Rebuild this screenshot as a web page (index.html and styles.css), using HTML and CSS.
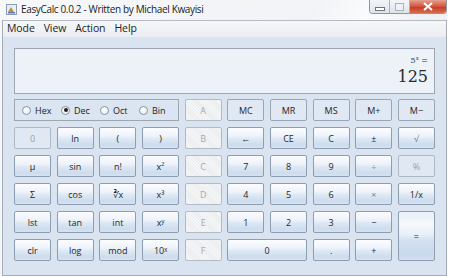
FILE: index.html
```html
<!DOCTYPE html>
<html>
<head>
<meta charset="utf-8">
<link rel="stylesheet" href="styles.css">
</head>
<body>
<div class="window">
  <div class="titlebar">
    <svg class="appicon" width="11" height="11" viewBox="0 0 11 11">
      <rect x="0.5" y="0.5" width="10" height="10" fill="#e9eef5" stroke="#8d9bb0"/>
      <path d="M2 8 L5 3 L8 8 Z" fill="#c98a3a"/>
      <rect x="2" y="8" width="7" height="1.5" fill="#5a7fb0"/>
    </svg>
    <span class="title">EasyCalc 0.0.2 - Written by Michael Kwayisi</span>
    <div class="controls">
      <div class="ctl min"><span class="minbar"></span></div>
      <div class="ctl max"><span class="maxbox"></span></div>
      <div class="ctl close">
        <svg width="12" height="9" viewBox="0 0 12 9"><path d="M2 1 L10 8 M10 1 L2 8" stroke="#ffffff" stroke-width="2.2"/></svg>
      </div>
    </div>
  </div>
  <div class="frame">
    <div class="menubar">
      <span class="menu">Mode</span>
      <span class="menu">View</span>
      <span class="menu">Action</span>
      <span class="menu">Help</span>
    </div>
    <div class="content">
      <div class="display">
        <div class="expr">5³ =</div>
        <div class="result">125</div>
      </div>
      <div class="keys">
        <div class="radios">
          <label class="radio"><span class="dot"></span>Hex</label>
          <label class="radio"><span class="dot on"></span>Dec</label>
          <label class="radio"><span class="dot"></span>Oct</label>
          <label class="radio"><span class="dot"></span>Bin</label>
        </div>
        <div class="btn hex">A</div>
        <div class="btn flat">MC</div>
        <div class="btn flat">MR</div>
        <div class="btn flat">MS</div>
        <div class="btn flat">M+</div>
        <div class="btn flat">M−</div>

        <div class="btn flat dim">0</div>
        <div class="btn">ln</div>
        <div class="btn">(</div>
        <div class="btn">)</div>
        <div class="btn hex">B</div>
        <div class="btn">←</div>
        <div class="btn">CE</div>
        <div class="btn">C</div>
        <div class="btn">±</div>
        <div class="btn dimtext">√</div>

        <div class="btn">μ</div>
        <div class="btn">sin</div>
        <div class="btn">n!</div>
        <div class="btn">x²</div>
        <div class="btn hex">C</div>
        <div class="btn">7</div>
        <div class="btn">8</div>
        <div class="btn">9</div>
        <div class="btn dimtext">÷</div>
        <div class="btn flat dim">%</div>

        <div class="btn">Σ</div>
        <div class="btn">cos</div>
        <div class="btn">∛x</div>
        <div class="btn">x³</div>
        <div class="btn hex">D</div>
        <div class="btn">4</div>
        <div class="btn">5</div>
        <div class="btn">6</div>
        <div class="btn dimtext">×</div>
        <div class="btn">1/x</div>

        <div class="btn">lst</div>
        <div class="btn">tan</div>
        <div class="btn">int</div>
        <div class="btn">xʸ</div>
        <div class="btn hex">E</div>
        <div class="btn">1</div>
        <div class="btn">2</div>
        <div class="btn">3</div>
        <div class="btn">−</div>
        <div class="btn eq">=</div>

        <div class="btn">clr</div>
        <div class="btn">log</div>
        <div class="btn">mod</div>
        <div class="btn">10ˣ</div>
        <div class="btn hex">F</div>
        <div class="btn zero">0</div>
        <div class="btn">.</div>
        <div class="btn">+</div>
      </div>
    </div>
  </div>
</div>
</body>
</html>
```
FILE: styles.css
```css
html, body {
  margin: 0;
  padding: 0;
  background: #ffffff;
}
body {
  width: 450px;
  height: 276px;
  overflow: hidden;
  font-family: "Open Sans", "Noto Sans", sans-serif;
}
.window {
  width: 447px;
  height: 276px;
  display: flex;
  flex-direction: column;
  background: linear-gradient(115deg, #f7f8fa 0%, #f1f3f6 55%, #fafbfc 65%, #eef1f4 75%, #f5f6f8 100%);
}
.titlebar {
  height: 20px;
  display: flex;
  align-items: flex-start;
  flex: none;
}
.appicon {
  margin: 4px 0 0 6px;
}
.title {
  margin: 2px 0 0 4px;
  font-family: "Open Sans", sans-serif;
  font-size: 10px;
  letter-spacing: -0.35px;
  color: #1b1b1b;
  line-height: 14px;
}
.controls {
  margin-left: auto;
  display: flex;
  height: 13px;
  border: 1px solid #8e96a3;
  border-top: none;
  border-radius: 0 0 4px 4px;
  overflow: hidden;
  margin-right: 0;
}
.ctl {
  height: 13px;
  display: flex;
  align-items: center;
  justify-content: center;
}
.min, .max {
  width: 19px;
  background: linear-gradient(#f3f5f8, #dfe4ea);
  border-right: 1px solid #a9b1bc;
}
.minbar {
  width: 8px;
  height: 2px;
  border: 1px solid #6b7584;
  background: #ffffff;
  margin-top: 4px;
}
.maxbox {
  width: 7px;
  height: 6px;
  border: 1px solid #aab2bd;
  background: #eef1f5;
}
.close {
  width: 36px;
  background: linear-gradient(#e5a08f, #d3543c 50%, #c23a22 51%, #d86a4e);
}
.frame {
  flex: 1;
  margin-left: 2px;
  border-left: 1px solid #a3acb8;
  border-right: 1px solid #a3acb8;
  border-bottom: 1px solid #a3acb8;
  display: flex;
  flex-direction: column;
  min-height: 0;
}
.menubar {
  height: 15px;
  border-top: 1px solid #b4bbc4;
  background: linear-gradient(#f5f6f7, #eceef1);
  display: flex;
  align-items: center;
  padding-left: 0;
  gap: 1px;
  flex: none;
}
.menu {
  font-family: "Open Sans", sans-serif;
  font-size: 10.5px;
  color: #1e1e1e;
  padding: 0 4px;
  line-height: 15px;
  letter-spacing: -0.1px;
}
.content {
  flex: 1;
  background: #d9e4f0;
  padding: 11px 11px 0 11px;
  border-top: 1px solid #e9eef4;
}
.display {
  height: 44px;
  border: 1px solid #9ea6b1;
  background: #edf1f8;
  display: flex;
  flex-direction: column;
  align-items: flex-end;
  padding-right: 6px;
  margin-bottom: 5px;
}
.expr {
  font-family: "DejaVu Serif", serif;
  font-size: 8px;
  color: #333;
  margin-top: 7px;
  line-height: 10px;
}
.result {
  font-family: "DejaVu Serif", serif;
  font-size: 16px;
  color: #2a2a2a;
  line-height: 18px;
  margin-top: 2px;
}
.keys {
  display: grid;
  grid-template-columns: repeat(10, 1fr);
  grid-template-rows: repeat(6, 22px);
  column-gap: 5.5px;
  row-gap: 6px;
}
.radios {
  grid-column: span 4;
  border: 1px solid #9ea6b1;
  background: #dae5f1;
  display: flex;
  align-items: center;
  padding-left: 7px;
  gap: 0;
}
.radio {
  display: flex;
  align-items: center;
  font-size: 9px;
  color: #222;
  width: 39px;
}
.dot {
  width: 7px;
  height: 7px;
  border: 1px solid #8a94a2;
  border-radius: 50%;
  background: radial-gradient(circle at 40% 35%, #ffffff, #e3e8ee);
  margin-right: 4px;
  position: relative;
  box-sizing: content-box;
}
.dot.on::after {
  content: "";
  position: absolute;
  left: 1.5px;
  top: 1.5px;
  width: 4px;
  height: 4px;
  border-radius: 50%;
  background: #1e1e1e;
}
.btn {
  box-sizing: border-box;
  border: 1px solid #8d9db2;
  border-radius: 2px;
  background: linear-gradient(#fbfcfe 0%, #eef3f9 40%, #dde8f4 55%, #ccdcee 85%, #d7e3f1 100%);
  display: flex;
  align-items: center;
  justify-content: center;
  font-size: 9px;
  color: #1f1f1f;
  font-family: "Open Sans", sans-serif;
}
.btn.flat {
  background: #dfe8f3;
  border-color: #98a6b8;
}
.btn.dim {
  color: #9aa3ad;
  border-color: #aeb9c6;
}
.btn.dimtext {
  color: #7d848c;
}
.btn.hex {
  background-color: #eaecee;
  background-image: repeating-linear-gradient(45deg, rgba(255,255,255,0.5) 0 1px, transparent 1px 2px);
  border-color: #b4bac1;
  color: #a6aaaf;
}
.btn.eq {
  grid-row: span 2;
  background: linear-gradient(#e8eff8 0%, #f6f9fc 25%, #eaf0f8 45%, #d2e0f0 60%, #c8d9ec 90%, #d3e1f0 100%);
}
.btn.zero {
  grid-column: span 2;
}
```
